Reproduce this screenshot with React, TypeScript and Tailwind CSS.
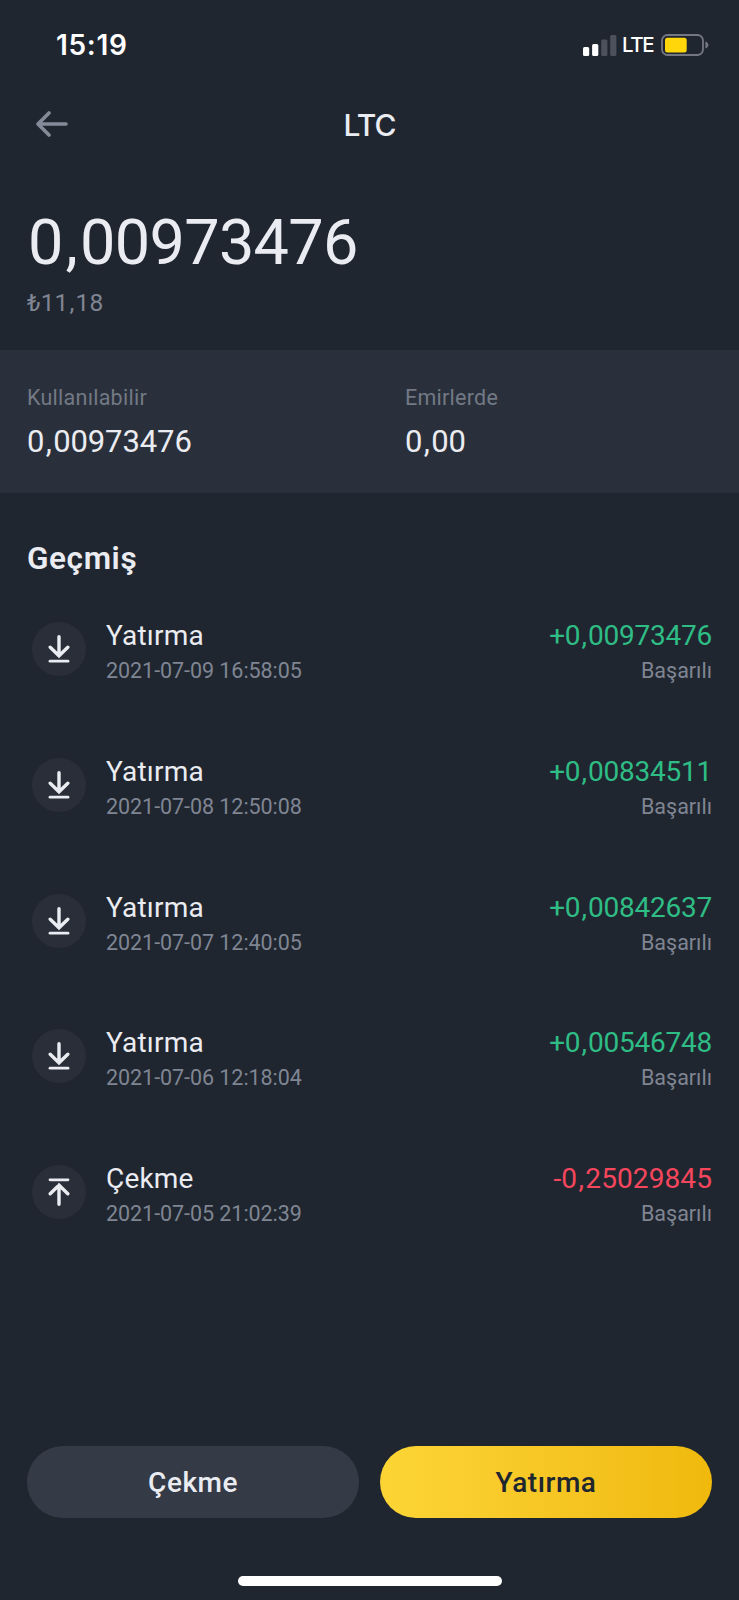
import { clsx } from 'clsx';

type Transaction = {
  type: 'deposit' | 'withdraw';
  title: string;
  date: string;
  amount: string;
};

const transactions: Transaction[] = [
  { type: 'deposit', title: 'Yatırma', date: '2021-07-09 16:58:05', amount: '+0,00973476' },
  { type: 'deposit', title: 'Yatırma', date: '2021-07-08 12:50:08', amount: '+0,00834511' },
  { type: 'deposit', title: 'Yatırma', date: '2021-07-07 12:40:05', amount: '+0,00842637' },
  { type: 'deposit', title: 'Yatırma', date: '2021-07-06 12:18:04', amount: '+0,00546748' },
  { type: 'withdraw', title: 'Çekme', date: '2021-07-05 21:02:39', amount: '-0,25029845' },
];

// Number with a bit of air around the decimal comma
const Amount = ({ value, className }: { value: string; className?: string }) => {
  const [whole, decimals] = value.split(',');
  return (
    <p className={clsx('whitespace-nowrap', className)}>
      {whole}
      <span className="px-[0.045em]">,</span>
      {decimals}
    </p>
  );
};

const StatusBar = () => (
  <div className="flex h-[90px] items-center justify-between pl-[56px] pr-[30px] font-['Inter',sans-serif] text-white">
    <span className="text-[28px] font-semibold leading-none tracking-[0.7px]">15:19</span>
    <div className="flex items-center">
      <svg width="34" height="21" viewBox="0 0 34 21">
        <rect x="0" y="12" width="6.2" height="9" rx="1.5" fill="#fff" />
        <rect x="9.1" y="9" width="6.2" height="12" rx="1.5" fill="#fff" />
        <rect x="18.2" y="4.5" width="6.2" height="16.5" rx="1.5" fill="#4d515b" />
        <rect x="27.2" y="0" width="6.2" height="21" rx="1.5" fill="#4d515b" />
      </svg>
      <span className="ml-[5px] w-[39px] text-[20.5px] font-medium leading-none tracking-[-1.4px]">LTE</span>
      <svg width="48" height="22" viewBox="0 0 48 22">
        <rect x="1" y="1" width="41" height="20" rx="5.5" fill="none" stroke="#747781" strokeWidth="1.8" />
        <rect x="4" y="3.8" width="21.7" height="14.7" rx="2.5" fill="#ffd60a" />
        <path d="M44.4 7.5c4 1.3 4 5.7 0 7z" fill="#747781" />
      </svg>
    </div>
  </div>
);

const Header = () => (
  <header className="grid h-[70px] grid-cols-3 items-center px-[35px]">
    <svg className="mb-[2px]" width="33" height="26" viewBox="0 0 33 26" fill="none" stroke="#848a98" strokeWidth="3.6" strokeLinecap="round" strokeLinejoin="round">
      <path d="M14 2 3 13l11 11M3 13h28" />
    </svg>
    <h1 className="text-center font-['Inter',sans-serif] text-[30px] font-medium leading-none tracking-[-0.9px]">LTC</h1>
  </header>
);

const ArrowIcon = ({ type }: { type: Transaction['type'] }) => (
  <div className="flex size-[54px] items-center justify-center rounded-full bg-[#2a2e39]">
    <svg
      width="22"
      height="28"
      viewBox="0 0 22 28"
      fill="none"
      stroke="#eaecf2"
      strokeWidth="3.4"
      strokeLinecap="round"
      className={clsx(type === 'withdraw' && 'rotate-180')}
    >
      <path d="M11 1.8v19M2.2 12.3l8.8 8.5 8.8-8.5" />
      <path d="M2 26.2h18" strokeWidth="2.8" />
    </svg>
  </div>
);

const TransactionRow = ({ item }: { item: Transaction }) => (
  <li className="flex h-[135.75px] items-start">
    <div className="mt-[5px]">
      <ArrowIcon type={item.type} />
    </div>
    <div className="ml-[20px] flex-1">
      <p className="text-[28px] leading-[38px] tracking-[0.2px]">{item.title}</p>
      <p className="text-[21.5px] leading-[32px] tracking-[-0.05px] text-[#7f8592]">{item.date}</p>
    </div>
    <div className="text-right">
      <Amount
        value={item.amount}
        className={clsx(
          'text-[28px] leading-[38px]',
          item.type === 'deposit' ? 'tracking-[-0.25px] text-[#2ebd85]' : 'tracking-[0.1px] text-[#f6465d]'
        )}
      />
      <p className="text-[21.5px] leading-[32px] text-[#7f8592]">Başarılı</p>
    </div>
  </li>
);

const App = () => {
  return (
    <div className="flex h-[1600px] w-[739px] flex-col overflow-hidden bg-[#202630] font-['Roboto',sans-serif] text-[#eaecf2]">
      <StatusBar />
      <Header />

      <section className="h-[190px] px-[27px] pt-[46px]">
        <Amount value="0,00973476" className="ml-px text-[63px] leading-[74px] tracking-[-0.7px]" />
        <Amount value="₺11,18" className="mt-[7px] text-[24.5px] leading-[32px] tracking-[0.1px] text-[#7f8592]" />
      </section>

      <section className="flex h-[143px] bg-[#2a303b] pl-[27px] pt-[33px]">
        <div className="w-[378px]">
          <p className="text-[21.5px] leading-[30px] tracking-[0.25px] text-[#727985]">Kullanılabilir</p>
          <Amount value="0,00973476" className="mt-[9px] text-[31px] leading-[40px] tracking-[-0.1px]" />
        </div>
        <div>
          <p className="text-[21.5px] leading-[30px] tracking-[0.25px] text-[#727985]">Emirlerde</p>
          <Amount value="0,00" className="mt-[9px] text-[31px] leading-[40px] tracking-[-0.1px]" />
        </div>
      </section>

      <section className="flex-1 pl-[32px] pr-[27px] pt-[43px]">
        <h2 className="-ml-[5px] text-[31.5px] font-semibold leading-[45px] tracking-[0.6px]">Geçmiş</h2>
        <ul className="mt-[36px]">
          {transactions.map((item) => (
            <TransactionRow key={item.date} item={item} />
          ))}
        </ul>
      </section>

      <footer className="h-[154px] shrink-0 px-[27px]">
        <div className="grid grid-cols-2 gap-[21px]">
          <button className="h-[72px] rounded-full bg-[#343a46] pt-[2px] text-[28px] font-medium tracking-[0.5px]">Çekme</button>
          <button className="h-[72px] rounded-full bg-linear-to-r from-[#fcd535] to-[#f0b90b] pt-[2px] text-[28px] font-medium tracking-[0.5px] text-[#202630]">
            Yatırma
          </button>
        </div>
        <div className="mx-auto mt-[58px] h-[10px] w-[264px] rounded-full bg-white" />
      </footer>
    </div>
  );
};

export default App;
